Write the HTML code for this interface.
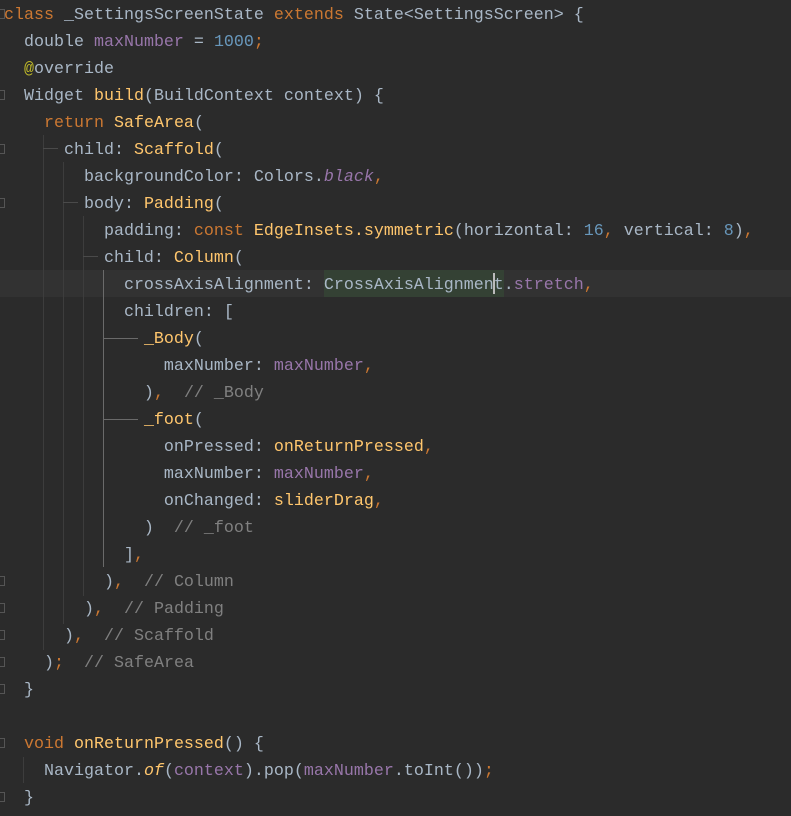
<!DOCTYPE html><html><head><style>
body{margin:0;width:791px;height:816px;background:#2b2b2b;overflow:hidden;position:relative;font-family:"Liberation Mono",monospace;font-size:16.67px;color:#a9b7c6}
.l{position:absolute;left:4px;height:27px;line-height:27px;white-space:pre;margin-top:2px}
.k{color:#cc7832}.f{color:#ffc66d}.p{color:#9876aa}.n{color:#6897bb}.c{color:#808080}.a{color:#bbb529}.i{font-style:italic}
.v{position:absolute;width:1px;background:#3d3d3d}.h{position:absolute;height:1px;background:#4a4a4a}
.g{position:absolute;left:0;width:5px;height:10px;border:1px solid #555;border-left:none;box-sizing:border-box}
</style></head><body>
<div style="position:absolute;left:0;top:270px;width:791px;height:27px;background:#323232"></div>
<div style="position:absolute;left:324px;top:270px;width:180px;height:27px;background:#344134"></div>
<div style="position:absolute;left:493px;top:273px;width:2px;height:21px;background:#bbbbbb"></div>
<div class="v" style="left:43px;top:135px;height:515px"></div>
<div class="h" style="left:43px;top:148px;width:15px"></div>
<div class="v" style="left:63px;top:162px;height:462px"></div>
<div class="h" style="left:63px;top:202px;width:15px"></div>
<div class="v" style="left:83px;top:216px;height:380px"></div>
<div class="h" style="left:83px;top:256px;width:15px"></div>
<div class="v" style="left:103px;top:270px;height:297px;background:#6a6a6a"></div>
<div class="h" style="left:103px;top:338px;width:35px;background:#6a6a6a"></div>
<div class="h" style="left:103px;top:419px;width:35px;background:#6a6a6a"></div>
<div class="v" style="left:23px;top:757px;height:26px"></div>
<div class="g" style="top:9px"></div><div class="g" style="top:90px"></div><div class="g" style="top:144px"></div><div class="g" style="top:198px"></div><div class="g" style="top:576px"></div><div class="g" style="top:603px"></div><div class="g" style="top:630px"></div><div class="g" style="top:657px"></div><div class="g" style="top:684px"></div><div class="g" style="top:738px"></div><div class="g" style="top:792px"></div>
<div class="l" style="top:0"><span class="k">class</span> _SettingsScreenState <span class="k">extends</span> State&lt;SettingsScreen&gt; {</div>
<div class="l" style="top:27px">  double <span class="p">maxNumber</span> = <span class="n">1000</span><span class="k">;</span></div>
<div class="l" style="top:54px">  <span class="a">@</span>override</div>
<div class="l" style="top:81px">  Widget <span class="f">build</span>(BuildContext context) {</div>
<div class="l" style="top:108px">    <span class="k">return</span> <span class="f">SafeArea</span>(</div>
<div class="l" style="top:135px">      child: <span class="f">Scaffold</span>(</div>
<div class="l" style="top:162px">        backgroundColor: Colors.<span class="p i">black</span><span class="k">,</span></div>
<div class="l" style="top:189px">        body: <span class="f">Padding</span>(</div>
<div class="l" style="top:216px">          padding: <span class="k">const</span> <span class="f">EdgeInsets.symmetric</span>(horizontal: <span class="n">16</span><span class="k">,</span> vertical: <span class="n">8</span>)<span class="k">,</span></div>
<div class="l" style="top:243px">          child: <span class="f">Column</span>(</div>
<div class="l" style="top:270px">            crossAxisAlignment: CrossAxisAlignment.<span class="p">stretch</span><span class="k">,</span></div>
<div class="l" style="top:297px">            children: [</div>
<div class="l" style="top:324px">              <span class="f">_Body</span>(</div>
<div class="l" style="top:351px">                maxNumber: <span class="p">maxNumber</span><span class="k">,</span></div>
<div class="l" style="top:378px">              )<span class="k">,</span>  <span class="c">// _Body</span></div>
<div class="l" style="top:405px">              <span class="f">_foot</span>(</div>
<div class="l" style="top:432px">                onPressed: <span class="f">onReturnPressed</span><span class="k">,</span></div>
<div class="l" style="top:459px">                maxNumber: <span class="p">maxNumber</span><span class="k">,</span></div>
<div class="l" style="top:486px">                onChanged: <span class="f">sliderDrag</span><span class="k">,</span></div>
<div class="l" style="top:513px">              )  <span class="c">// _foot</span></div>
<div class="l" style="top:540px">            ]<span class="k">,</span></div>
<div class="l" style="top:567px">          )<span class="k">,</span>  <span class="c">// Column</span></div>
<div class="l" style="top:594px">        )<span class="k">,</span>  <span class="c">// Padding</span></div>
<div class="l" style="top:621px">      )<span class="k">,</span>  <span class="c">// Scaffold</span></div>
<div class="l" style="top:648px">    )<span class="k">;</span>  <span class="c">// SafeArea</span></div>
<div class="l" style="top:675px">  }</div>
<div class="l" style="top:729px">  <span class="k">void</span> <span class="f">onReturnPressed</span>() {</div>
<div class="l" style="top:756px">    Navigator.<span class="f i">of</span>(<span class="p">context</span>).pop(<span class="p">maxNumber</span>.toInt())<span class="k">;</span></div>
<div class="l" style="top:783px">  }</div>
</body></html>
